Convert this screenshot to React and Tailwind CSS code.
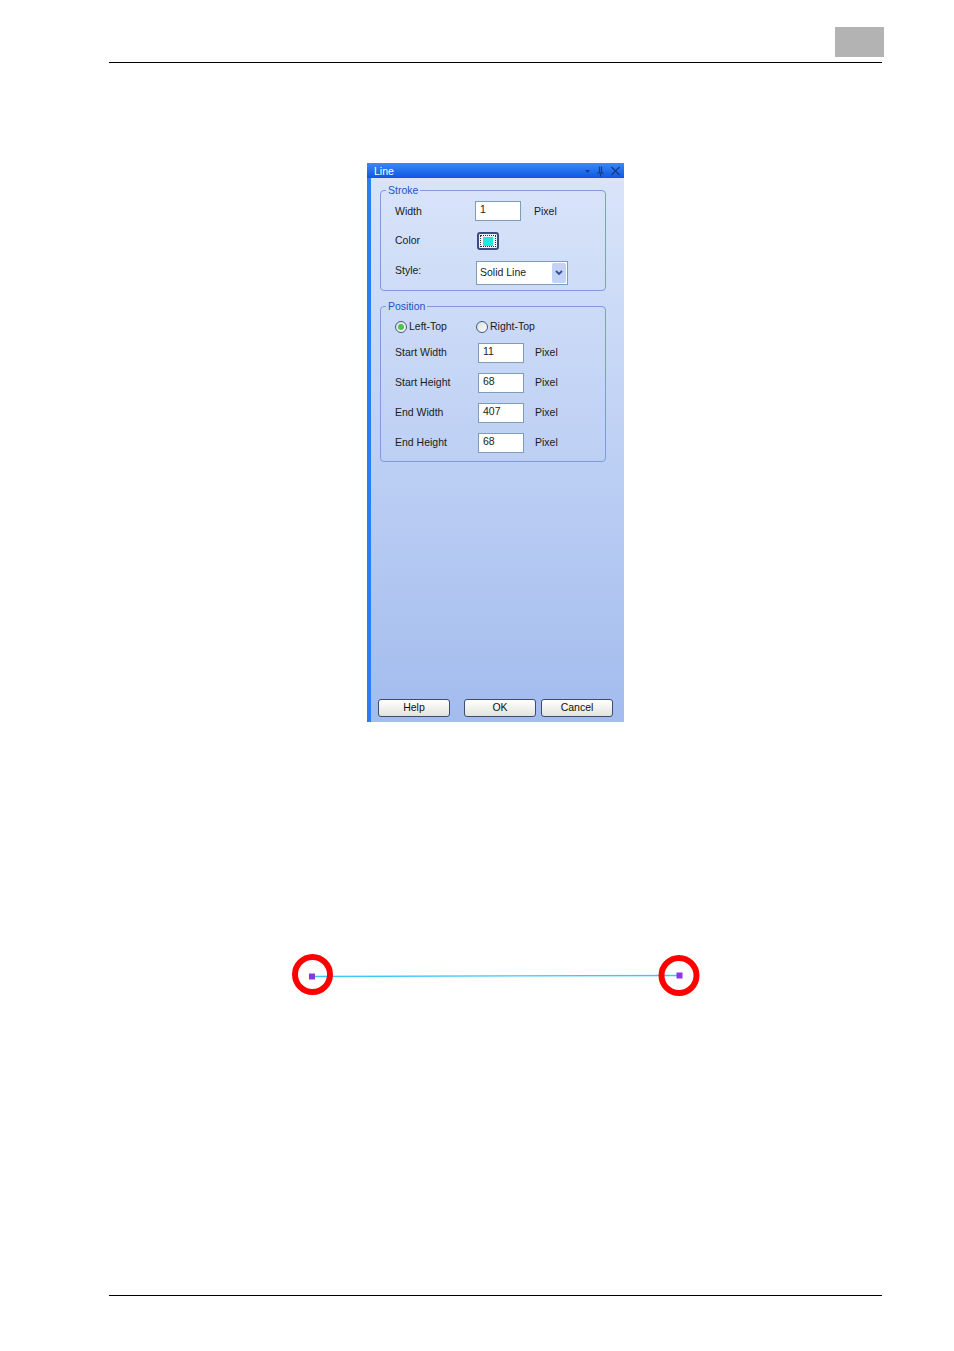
import React from 'react';

const FONT = { fontFamily: '"Liberation Sans", Arial, sans-serif' };

function Field({ value, className = '' }) {
  return (
    <div
      className={`h-[20px] w-[46px] border border-[#7f9db9] bg-white pl-[4px] text-[10.5px] leading-[14px] text-[#222] ${className}`}
    >
      {value}
    </div>
  );
}

function Radio({ checked, label }) {
  return (
    <div className="flex items-center gap-[2px]">
      <span className="flex h-[12px] w-[12px] items-center justify-center rounded-full border border-[#3c5a7e] bg-gradient-to-br from-[#dcdcdc] to-white">
        {checked && <span className="h-[6px] w-[6px] rounded-full bg-[#4cc34c]" />}
      </span>
      <span>{label}</span>
    </div>
  );
}

function Btn({ children, className = '' }) {
  return (
    <div
      className={`flex h-[18px] w-[72px] shrink-0 items-center justify-center rounded-[3px] border border-[#3d4b6e] bg-gradient-to-b from-white to-[#e3e3dc] text-[10.5px] text-[#111] ${className}`}
    >
      {children}
    </div>
  );
}

function Group({ title, className = '', children }) {
  return (
    <fieldset className={`w-[226px] rounded-[4px] border border-[#7d9cd8] ${className}`}>
      <legend className="ml-[5px] px-[2px] text-[10.5px] leading-[12px] text-[#1f52c4]">{title}</legend>
      {children}
    </fieldset>
  );
}

export default function App() {
  const rows = [
    ['Start Width', '11'],
    ['Start Height', '68'],
    ['End Width', '407'],
    ['End Height', '68'],
  ];

  return (
    <div className="flex h-[1351px] w-[954px] flex-col bg-white" style={FONT}>
      <div className="ml-[109px] flex w-[773px] justify-end border-b border-black pb-[5px] pt-[27px]">
        <div className="-mr-[2px] h-[30px] w-[49px] bg-[#b3b3b3]" />
      </div>

      <div className="ml-[367px] mt-[100px] flex h-[559px] w-[257px] flex-col">
        <div className="flex h-[15px] items-center justify-between bg-gradient-to-b from-[#3b88f6] to-[#0c57e2] pl-[7px] pr-[3px]">
          <span className="pt-[2px] text-[10.5px] leading-none text-white">Line</span>
          <svg className="shrink-0" width="40" height="12" viewBox="0 0 40 12">
            <path d="M4 5 L9 5 L6.5 8 Z" fill="#163a8a" />
            <path d="M18.5 1.5 L18.5 8 M20.5 1.5 L20.5 8 M16 8 L23 8 M19.5 8 L19.5 11.5" stroke="#163a8a" strokeWidth="1.2" fill="none" />
            <path d="M30.5 2 L38.5 10 M38.5 2 L30.5 10" stroke="#163a8a" strokeWidth="1.4" fill="none" />
          </svg>
        </div>
        <div className="flex flex-1">
          <div className="w-[4px] bg-[#2c7df4]" />
          <div className="flex flex-1 flex-col bg-gradient-to-b from-[#d9e4f9] to-[#a3bcee] text-[10.5px] text-[#1b1b1b]">
            <Group title="Stroke" className="ml-[9px] mt-[6px] pb-[5px]">
              <div className="mt-[5px] flex h-[20px] items-center pl-[14px]">
                <span className="w-[80px] pt-[2px]">Width</span>
                <Field value="1" />
                <span className="ml-[13px] pt-[2px]">Pixel</span>
              </div>
              <div className="mt-[11px] flex h-[18px] items-center pl-[14px]">
                <span className="w-[82px]">Color</span>
                <div className="flex h-[18px] w-[22px] items-center justify-center rounded-[3px] border-2 border-[#3a4d7c] bg-[#eef2fb]">
                  <div className="flex h-[12px] w-[16px] items-center justify-center border border-dotted border-[#333]">
                    <div className="h-[9px] w-[10px] bg-[#20e8e0]" />
                  </div>
                </div>
              </div>
              <div className="mt-[11px] flex h-[24px] items-center pl-[14px]">
                <span className="w-[81px] pb-[5px]">Style:</span>
                <div className="flex h-[24px] w-[92px] items-center border border-[#7f9db9] bg-white">
                  <span className="flex-1 pl-[3px]">Solid Line</span>
                  <div className="mr-px flex h-[20px] w-[14px] items-center justify-center rounded-[2px] bg-[#c3d3f5]">
                    <svg width="8" height="6" viewBox="0 0 8 6">
                      <path d="M1 1 L4 4 L7 1" stroke="#34508e" strokeWidth="1.8" fill="none" />
                    </svg>
                  </div>
                </div>
              </div>
            </Group>

            <Group title="Position" className="ml-[9px] mt-[9px] pb-[8px]">
              <div className="mt-[9px] flex h-[12px] items-center pl-[14px]">
                <div className="w-[81px]">
                  <Radio checked label="Left-Top" />
                </div>
                <Radio label="Right-Top" />
              </div>
              {rows.map(([label, value]) => (
                <div key={label} className="mt-[10px] flex h-[20px] items-center pl-[14px]">
                  <span className="w-[83px]">{label}</span>
                  <Field value={value} />
                  <span className="ml-[11px]">Pixel</span>
                </div>
              ))}
            </Group>

            <div className="mt-auto flex pb-[5px] pl-[7px]">
              <Btn>Help</Btn>
              <Btn className="ml-[14px]">OK</Btn>
              <Btn className="ml-[5px]">Cancel</Btn>
            </div>
          </div>
        </div>
      </div>

      <svg className="mt-[213px] block" width="954" height="80" viewBox="0 935 954 80">
        <line x1="312" y1="976.5" x2="679" y2="975.5" stroke="#3cc8f8" strokeWidth="1.3" />
        <circle cx="312.5" cy="974.5" r="17.5" fill="none" stroke="#ff0000" strokeWidth="6" />
        <circle cx="679" cy="975.5" r="17.5" fill="none" stroke="#ff0000" strokeWidth="6" />
        <rect x="309" y="973.5" width="6" height="6" fill="#8b35e6" />
        <rect x="676.5" y="972.5" width="6" height="6" fill="#8b35e6" />
      </svg>

      <div className="ml-[109px] mt-[280px] w-[773px] border-t border-black" />
    </div>
  );
}
